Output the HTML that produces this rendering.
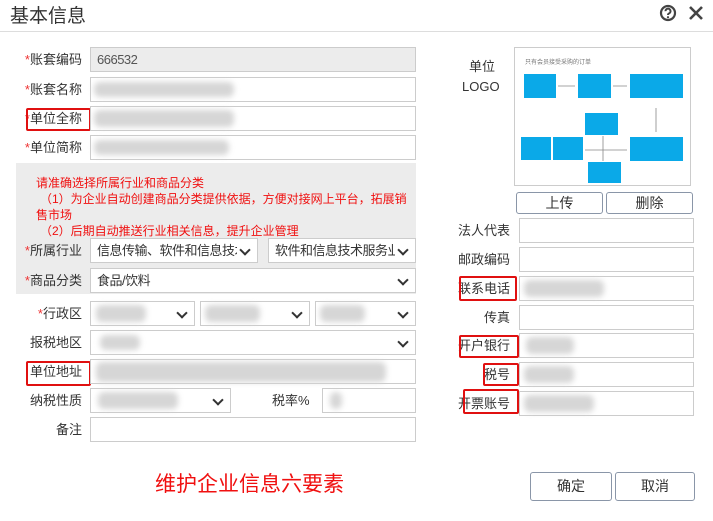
<!DOCTYPE html>
<html><head><meta charset="utf-8"><style>
*{box-sizing:border-box;margin:0;padding:0}
body{width:713px;height:521px;background:#fff;font-family:"Liberation Sans","Noto Sans CJK SC",sans-serif;font-size:13px;color:#333;position:relative;overflow:hidden}
.a{position:absolute}
.in{position:absolute;border:1px solid #ccc;background:#fff;height:25px}
.lb{position:absolute;text-align:right;font-size:13px;color:#333;line-height:25px}
.lb i{color:#e33;font-style:normal}
.sel::after{content:"";position:absolute;right:8px;top:7px;width:6px;height:6px;border-right:2px solid #333;border-bottom:2px solid #333;transform:rotate(45deg)}
.t{position:absolute;left:6px;right:20px;top:0;line-height:23px;font-size:13px;color:#333;white-space:nowrap;overflow:hidden;letter-spacing:-0.5px}
.bl{position:absolute;background:#d6d6d6;filter:blur(3px);border-radius:6px}
.rb{position:absolute;border:2px solid #e01010;border-radius:2px}
.btn{position:absolute;border:1px solid #8a96a8;border-radius:3px;background:#fff;text-align:center;font-size:14px;color:#333}
.red{color:#f01010;font-size:12px;position:absolute;left:20px;white-space:nowrap}
</style></head><body>
<div class="a" style="left:10px;top:1px;font-size:19px;color:#333">基本信息</div>
<div class="a" style="left:0;top:31px;width:713px;height:1px;background:#ddd"></div>
<svg class="a" style="left:659px;top:4px" width="18" height="18" viewBox="0 0 18 18"><circle cx="9" cy="9" r="7" fill="none" stroke="#444" stroke-width="2.2"/><path d="M6.5 7.2a2.5 2.5 0 1 1 3.6 2.2c-.8.4-1.1.9-1.1 1.6" fill="none" stroke="#444" stroke-width="2"/><circle cx="9" cy="13.2" r="1.1" fill="#444"/></svg>
<svg class="a" style="left:688px;top:5px" width="16" height="16" viewBox="0 0 16 16"><path d="M2 2L14 14M14 2L2 14" stroke="#444" stroke-width="2.6"/></svg>

<div class="lb" style="left:0;width:82px;top:47px"><i>*</i>账套编码</div>
<div class="in" style="left:90px;top:47px;width:326px;background:#ececec"><span class="t" style="color:#555">666532</span></div>
<div class="lb" style="left:0;width:82px;top:77px"><i>*</i>账套名称</div>
<div class="in" style="left:90px;top:77px;width:326px"></div>
<div class="bl" style="left:94px;top:82px;width:140px;height:15px"></div>
<div class="lb" style="left:0;width:82px;top:106px"><i>*</i>单位全称</div>
<div class="rb" style="left:26px;top:108px;width:65px;height:23px"></div>
<div class="in" style="left:90px;top:106px;width:326px"></div>
<div class="bl" style="left:94px;top:110px;width:140px;height:17px"></div>
<div class="lb" style="left:0;width:82px;top:135px"><i>*</i>单位简称</div>
<div class="in" style="left:90px;top:135px;width:326px"></div>
<div class="bl" style="left:94px;top:140px;width:135px;height:15px"></div>

<div class="a" style="left:16px;top:163px;width:400px;height:131px;background:#ececec"></div>
<div class="red" style="left:36px;top:174px">请准确选择所属行业和商品分类</div>
<div class="red" style="left:40px;top:190px">（1）为企业自动创建商品分类提供依据，方便对接网上平台，拓展销</div>
<div class="red" style="left:36px;top:206px">售市场</div>
<div class="red" style="left:40px;top:222px">（2）后期自动推送行业相关信息，提升企业管理</div>
<div class="lb" style="left:0;width:82px;top:238px"><i>*</i>所属行业</div>
<div class="in sel" style="left:90px;top:238px;width:168px"><span class="t">信息传输、软件和信息技术</span></div>
<div class="in sel" style="left:268px;top:238px;width:148px"><span class="t">软件和信息技术服务业</span></div>
<div class="lb" style="left:0;width:82px;top:268px"><i>*</i>商品分类</div>
<div class="in sel" style="left:90px;top:268px;width:326px"><span class="t">食品/饮料</span></div>

<div class="lb" style="left:0;width:82px;top:301px"><i>*</i>行政区</div>
<div class="in sel" style="left:90px;top:301px;width:105px"></div>
<div class="bl" style="left:96px;top:305px;width:50px;height:17px"></div>
<div class="in sel" style="left:200px;top:301px;width:110px"></div>
<div class="bl" style="left:205px;top:305px;width:55px;height:17px"></div>
<div class="in sel" style="left:315px;top:301px;width:101px"></div>
<div class="bl" style="left:320px;top:305px;width:45px;height:17px"></div>
<div class="lb" style="left:0;width:82px;top:330px">报税地区</div>
<div class="in sel" style="left:90px;top:330px;width:326px"></div>
<div class="bl" style="left:100px;top:335px;width:40px;height:15px"></div>
<div class="lb" style="left:0;width:82px;top:359px">单位地址</div>
<div class="rb" style="left:26px;top:361px;width:65px;height:25px"></div>
<div class="in" style="left:90px;top:359px;width:326px"></div>
<div class="bl" style="left:96px;top:362px;width:290px;height:20px"></div>
<div class="lb" style="left:0;width:82px;top:388px">纳税性质</div>
<div class="in sel" style="left:90px;top:388px;width:141px"></div>
<div class="bl" style="left:98px;top:392px;width:80px;height:17px"></div>
<div class="a" style="left:272px;top:388px;line-height:25px;color:#333">税率%</div>
<div class="in" style="left:322px;top:388px;width:94px"></div>
<div class="bl" style="left:330px;top:392px;width:12px;height:17px"></div>
<div class="lb" style="left:0;width:82px;top:417px">备注</div>
<div class="in" style="left:90px;top:417px;width:326px"></div>

<div class="a" style="left:468px;top:56px;width:28px;text-align:center;color:#333">单位</div>
<div class="a" style="left:462px;top:79px;color:#333;font-size:13px">LOGO</div>
<div class="a" style="left:514px;top:47px;width:177px;height:139px;border:1px solid #ccc;background:#fff">
<svg width="175" height="137" viewBox="0 0 175 137">
<rect x="9" y="26" width="32" height="24" fill="#0aa9e8"/><rect x="63" y="26" width="33" height="24" fill="#0aa9e8"/><rect x="115" y="26" width="53" height="24" fill="#0aa9e8"/>
<rect x="70" y="65" width="33" height="22" fill="#0aa9e8"/><rect x="6" y="89" width="30" height="23" fill="#0aa9e8"/><rect x="38" y="89" width="30" height="23" fill="#0aa9e8"/><rect x="115" y="89" width="53" height="24" fill="#0aa9e8"/><rect x="73" y="114" width="33" height="21" fill="#0aa9e8"/>
<path d="M43 38H60M98 38H112M141 60V84M112 102H70M88 88V113" stroke="#888" stroke-width="0.8" fill="none"/>
<text x="10" y="16" font-size="6" fill="#777">只有会员接受采购的订单</text></svg></div>
<div class="btn" style="left:516px;top:192px;width:87px;height:22px;line-height:20px">上传</div>
<div class="btn" style="left:606px;top:192px;width:87px;height:22px;line-height:20px">删除</div>

<div class="lb" style="left:440px;width:70px;top:218px">法人代表</div>
<div class="in" style="left:519px;top:218px;width:175px"></div>
<div class="lb" style="left:440px;width:70px;top:247px">邮政编码</div>
<div class="in" style="left:519px;top:247px;width:175px"></div>
<div class="lb" style="left:440px;width:70px;top:276px">联系电话</div>
<div class="rb" style="left:459px;top:276px;width:58px;height:25px"></div>
<div class="in" style="left:519px;top:276px;width:175px"></div>
<div class="bl" style="left:524px;top:280px;width:80px;height:17px"></div>
<div class="lb" style="left:440px;width:70px;top:305px">传真</div>
<div class="in" style="left:519px;top:305px;width:175px"></div>
<div class="lb" style="left:440px;width:70px;top:333px">开户银行</div>
<div class="rb" style="left:459px;top:335px;width:60px;height:23px"></div>
<div class="in" style="left:519px;top:333px;width:175px"></div>
<div class="bl" style="left:526px;top:337px;width:48px;height:17px"></div>
<div class="lb" style="left:440px;width:70px;top:362px">税号</div>
<div class="rb" style="left:483px;top:363px;width:36px;height:23px"></div>
<div class="in" style="left:519px;top:362px;width:175px"></div>
<div class="bl" style="left:524px;top:366px;width:50px;height:17px"></div>
<div class="lb" style="left:440px;width:70px;top:391px">开票账号</div>
<div class="rb" style="left:463px;top:389px;width:56px;height:25px"></div>
<div class="in" style="left:519px;top:391px;width:175px"></div>
<div class="bl" style="left:524px;top:395px;width:70px;height:17px"></div>

<div class="a" style="left:155px;top:468px;font-size:21px;color:#f01010">维护企业信息六要素</div>
<div class="btn" style="left:530px;top:472px;width:82px;height:29px;line-height:27px">确定</div>
<div class="btn" style="left:615px;top:472px;width:80px;height:29px;line-height:27px">取消</div>
</body></html>
